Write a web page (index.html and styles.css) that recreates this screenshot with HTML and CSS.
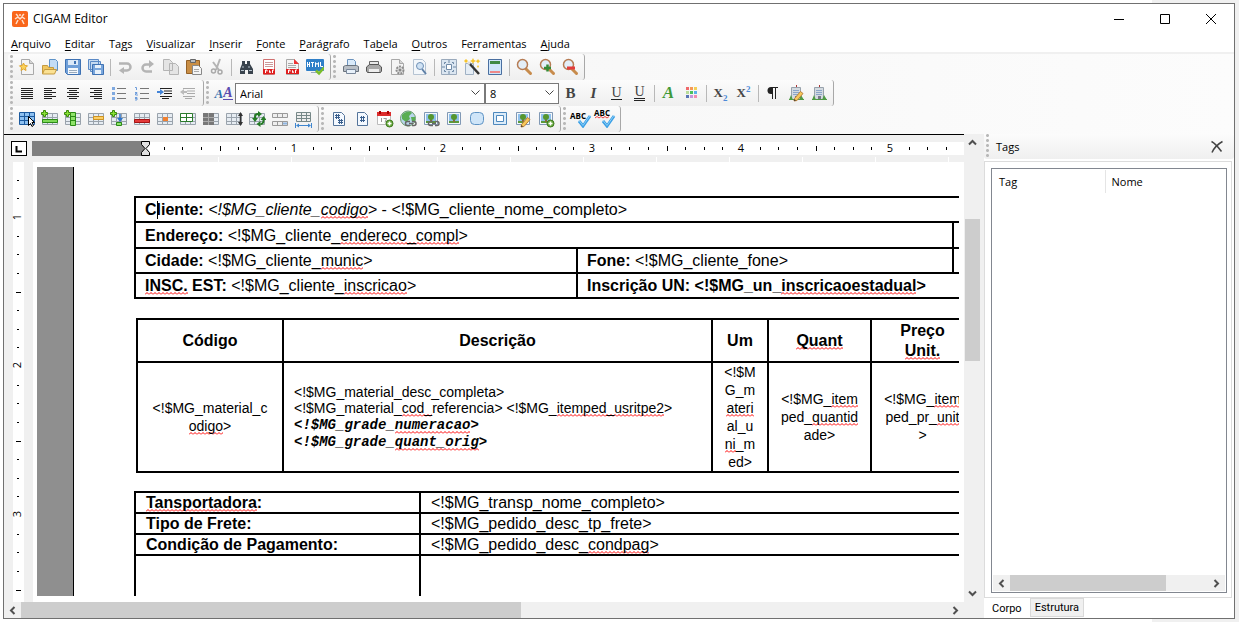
FILE: index.html
```html
<!DOCTYPE html>
<html lang="pt-BR">
<head>
    <meta charset="UTF-8">
    <meta name="viewport" content="width=device-width, initial-scale=1.0">
    <title>CIGAM Editor</title>
    <link rel="stylesheet" href="styles.css">
</head>
<body>

    <!-- shared icon parts -->
    <svg class="defs" width="0" height="0" aria-hidden="true">
        <defs>
            <pattern id="ticks-x" x="113" y="0" width="149" height="27" patternUnits="userSpaceOnUse">
                <path d="M19.5 12v3M37.5 12v3M56.5 12v3M75.5 11v5M93.5 12v3M112.5 12v3M130.5 12v3" stroke="#000"/>
            </pattern>
            <pattern id="ticks-y" x="0" y="55" width="11" height="149" patternUnits="userSpaceOnUse">
                <path d="M4 19.500h2M4 37.500h2M4 56.500h2M3 75.500h5M4 93.500h2M4 112.500h2M4 130.500h2" stroke="#000"/>
            </pattern>
            <pattern id="marks-x" x="186" y="0" width="73" height="27" patternUnits="userSpaceOnUse">
                <path d="M.5 22v5" stroke="#fff"/>
            </pattern>
            <symbol id="grid" viewBox="0 0 18 18">
                <path fill="#e6ecf2" d="M1 3h16v12H1z"/>
                <path fill="none" stroke="#9aa3ac" d="M1.500 3.500h15v11h-15zM1 7.500h16M1 11.500h16M6.500 3v12M11.500 3v12"/>
            </symbol>
            <symbol id="plus" viewBox="0 0 18 18">
                <path fill="#8ae234" stroke="#3a8a0c" d="M2.500 .5h2v2h2v2h-2v2h-2v-2h-2v-2h2z"/>
            </symbol>
            <symbol id="sheet" viewBox="0 0 18 18">
                <path fill="#f4f4f4" stroke="#a9a9a9" d="M3.500 1.500h8l4 4v11h-12z"/>
                <path fill="#d5d5d5" stroke="#a9a9a9" d="M11.500 1.500v4h4"/>
            </symbol>
            <symbol id="picture" viewBox="0 0 18 18">
                <path fill="#f3f8fc" stroke="#8199b5" d="M2.500 2.500h13v12h-13z"/>
                <path fill="#8fc0ec" d="M4 4h10v9H4z"/>
                <path fill="#5c9a3a" d="M4 11h10v2H4z"/>
                <path fill="#8a6a3c" d="M8 8h2v4H8z"/>
                <circle cx="9" cy="7" r="3" fill="#55962e"/>
            </symbol>
            <symbol id="chain" viewBox="0 0 18 18">
                <path fill="none" stroke="#666" stroke-width="1.500" d="M11 11.500H8.500a2 2 0 0 0 0 4H11M13 11.500h2a2 2 0 0 1 0 4h-2M10 13.500h4"/>
            </symbol>
            <symbol id="badge" viewBox="0 0 18 18">
                <circle cx="13.500" cy="13.500" r="3.500" fill="#66a83c" stroke="#3e7a1e"/>
                <path d="M13.500 11.500v4M11.500 13.500h4" stroke="#fff" stroke-width="1.500"/>
            </symbol>
            <symbol id="lens" viewBox="0 0 18 18">
                <path d="M11 11l4.500 4.500" stroke="#c78b4c" stroke-width="3" stroke-linecap="round"/>
                <circle cx="7.500" cy="6.500" r="5" fill="#e3eef8" stroke="#b67c54" stroke-width="1.500"/>
            </symbol>
            <symbol id="building" viewBox="0 0 18 18">
                <path fill="#d3dae0" stroke="#98a2ac" d="M4.500 3.500h9v12h-9z"/>
                <path d="M6 6.500h6M6 8.500h6M6 10.500h6" stroke="#8ba5c8"/>
                <path fill="#778" d="M8 12h3v4H8z"/>
                <path fill="#4f9a45" d="M2 16l2-5 2 5zM12 16l2-5 3 5zM2 15h15v1H2z"/>
                <path d="M9.500 1v2" stroke="#a33"/>
            </symbol>
            <symbol id="pencil" viewBox="0 0 18 18">
                <path fill="#f6c75a" stroke="#b9803a" d="M7.500 14.500l6-7 2.500 2-6 7-3 .5z"/>
                <path fill="#333" d="M7 17l.5-2 1.500 1.500z"/>
            </symbol>
            <symbol id="check" viewBox="0 0 22 18">
                <path fill="none" stroke="#3ba0e6" stroke-width="3" d="M9 11l4 5 7-10"/>
                <path fill="none" stroke="#8ccdf5" d="M9 10.500l4 5 7-10"/>
            </symbol>
        </defs>
    </svg>

    <div class="window">

        <header class="titlebar">
            <svg class="app-icon" width="16" height="16" viewBox="0 0 16 16">
                <rect width="16" height="16" rx="2" fill="#f9661b"/>
                <path fill="none" stroke="#ffe0cc" stroke-width="1.500" d="M4 3l2 2M12 3l-2 2M3 8l3-2 2 2 2-2 3 2M6 9l-2 4M10 9l2 4M8 3v2"/>
            </svg>
            <h1>CIGAM Editor</h1>
            <div class="window-controls">
                <button aria-label="Minimizar"><svg width="12" height="12"><path d="M1 6.500h10" stroke="#000"/></svg></button>
                <button aria-label="Maximizar"><svg width="12" height="12"><path d="M1.500 1.500h9v9h-9z" fill="none" stroke="#000"/></svg></button>
                <button aria-label="Fechar"><svg width="12" height="12"><path d="M1 1l10 10M11 1L1 11" stroke="#000"/></svg></button>
            </div>
        </header>

        <nav class="menubar">
            <button><u>A</u>rquivo</button>
            <button><u>E</u>ditar</button>
            <button>Ta<u>g</u>s</button>
            <button><u>V</u>isualizar</button>
            <button><u>I</u>nserir</button>
            <button><u>F</u>onte</button>
            <button><u>P</u>arágrafo</button>
            <button>Ta<u>b</u>ela</button>
            <button><u>O</u>utros</button>
            <button>Fe<u>r</u>ramentas</button>
            <button><u>A</u>juda</button>
        </nav>

        <div class="toolbars">
            <div class="toolbar-row">
                <div class="toolbar">
                    <button title="Novo"><svg viewBox="0 0 18 18"><use href="#sheet"/><path fill="#fbd25a" stroke="#e0a52e" d="M5.500 5l1.200 2.500 2.800.3-2 2 .5 2.700L5.500 11 3 12.500l.5-2.700-2-2 2.800-.3z"/></svg></button>
                    <button title="Abrir"><svg viewBox="0 0 18 18"><path fill="#c3dcf5" stroke="#5e93c8" d="M8.500 1.500h6l2 2v9h-8z"/><path fill="#f1c75f" stroke="#c49a40" d="M1.500 7.500h5l1 2h5v6h-11z"/><path fill="#fbe192" stroke="#c49a40" d="M3.500 11.500h12l-2 4.500h-12z"/></svg></button>
                    <button title="Salvar"><svg viewBox="0 0 18 18"><path fill="#6f9fd8" stroke="#3f72b3" d="M1.500 1.500h15v15h-13l-2-2z"/><path fill="#dbe9f8" d="M4 2h10v5H4z"/><path fill="#f4f8fc" d="M4 10h10v6H4z"/><path fill="#3f72b3" d="M10 3h2v3h-2z"/><path d="M5 12.500h8M5 14.500h8" stroke="#9ab"/></svg></button>
                    <button title="Salvar tudo"><svg viewBox="0 0 18 18"><path fill="#c6dbf1" stroke="#5b8ac6" d="M1.500 1.500h10v10h-10zM3.500 3.500h10v10h-10z"/><path fill="#79a6dc" stroke="#3f72b3" d="M5.500 6.500h11v10h-11z"/><path fill="#e8f1fa" d="M8 7h6v3H8zM8 12h6v4H8z"/></svg></button>
                    <span class="sep"></span>
                    <button title="Desfazer"><svg viewBox="0 0 18 18"><path fill="none" stroke="#b4b4b4" stroke-width="2.500" d="M3 5.500h8a3.500 3.500 0 0 1 0 7H6"/><path fill="#b4b4b4" d="M8 9v7l-5-3.500z"/></svg></button>
                    <button title="Refazer"><svg viewBox="0 0 18 18"><path fill="none" stroke="#b4b4b4" stroke-width="2.500" d="M12 6.500H7a3.500 3.500 0 0 0 0 7h6"/><path fill="#b4b4b4" d="M10 2v8l5-4z"/></svg></button>
                    <button title="Copiar"><svg viewBox="0 0 18 18"><path fill="#e4e4e4" stroke="#b4b4b4" d="M1.500 1.500h6l3 3v8h-9zM7.500 5.500h6l3 3v8h-9z"/></svg></button>
                    <button title="Colar"><svg viewBox="0 0 18 18"><path fill="#c98e45" stroke="#946127" d="M1.500 2.500h13v13h-13z"/><path fill="#b9bdc2" stroke="#666" d="M5.500 1.500h5v3h-5z"/><path fill="#f5f5f5" stroke="#888" d="M7.500 7.500h6l3 3v6h-9z"/><path d="M9 11.500h5M9 13.500h5" stroke="#aaa"/></svg></button>
                    <button title="Recortar"><svg viewBox="0 0 18 18"><path d="M12 1L8 12M5 4l6 8" stroke="#b4b4b4" stroke-width="2"/><circle cx="5.500" cy="13" r="2" fill="none" stroke="#a9a9a9" stroke-width="1.500"/><circle cx="12" cy="14" r="2" fill="none" stroke="#a9a9a9" stroke-width="1.500"/></svg></button>
                    <span class="sep"></span>
                    <button title="Localizar"><svg viewBox="0 0 18 18"><path fill="#39434d" d="M5 3h3v3h2V3h3v3l3 5v5h-5v-4H8v4H3v-5l2-5z"/><path stroke="#b8c4cf" d="M4 12.500h3M12 12.500h3M6 8v2M12 8v2"/></svg></button>
                    <button title="Exportar PDF"><svg viewBox="0 0 18 18"><path fill="#fff" stroke="#d07070" d="M3.500 1.500h11v15h-11z"/><path stroke="#c99" d="M5 4.500h8M5 6.500h8M5 8.500h8"/><path fill="#e01f1f" d="M3 11h12v5H3z"/><path fill="none" stroke="#fff" d="M5.500 15v-3h1.500v1.500M9.500 12.500v2h1zM12.500 15v-3H14"/></svg></button>
                    <button title="Gerar PDF"><svg viewBox="0 0 18 18"><use href="#sheet"/><path fill="#e33" d="M11 1l5 5h-5z"/><path stroke="#aaa" d="M5 5.500h5M5 7.500h8M5 9.500h8"/><path fill="#e01f1f" d="M3 11h13v5H3z"/><path fill="none" stroke="#fff" d="M5.500 15v-3h1.500v1.500M9.500 12.500v2h1zM12.500 15v-3H14"/></svg></button>
                    <button title="Exportar HTML"><svg viewBox="0 0 18 18"><rect y="1" width="18" height="12" rx="1" fill="#2f7fc8"/><path fill="none" stroke="#fff" d="M1.500 4v5M3.500 4v5M1.500 6.500h2M5 4.500h3M6.500 4v5M9.500 9V4.500l1.500 2 1.500-2V9M14.500 4v4.500H17"/><path d="M5 14.500h6" stroke="#9ab"/><path fill="none" stroke="#79bd2a" stroke-width="2.500" d="M10 12.500l3 3 5-6"/></svg></button>
                </div>
                <div class="toolbar">
                    <button title="Imprimir"><svg viewBox="0 0 18 18"><path fill="#d9eafa" stroke="#6c93bd" d="M5.500 1.500h6l2 2v5h-8z"/><path fill="#b9bfc6" stroke="#6a737d" d="M1.500 8.500l2-1h11l2 1v5h-15z"/><path fill="#e8f1fa" stroke="#7a889b" d="M4.500 11.500h9v4h-9z"/></svg></button>
                    <button title="Impressão rápida"><svg viewBox="0 0 18 18"><path fill="#e9e9e9" stroke="#666" d="M4.500 3.500h9v4h-9z"/><path fill="#a8a8a8" stroke="#555" d="M1.500 9l3-2.500h9l3 2.500v4l-1 1.500h-13l-1-1.500z"/><path fill="#eee" d="M4 11h10v3H4z"/></svg></button>
                    <button title="Configurar página"><svg viewBox="0 0 18 18"><use href="#sheet"/><circle cx="12" cy="12" r="3.500" fill="#ddd" stroke="#8c8c8c" stroke-width="2" stroke-dasharray="2 1"/><circle cx="12" cy="12" r="1.500" fill="#888"/></svg></button>
                    <button title="Visualizar impressão"><svg viewBox="0 0 18 18"><path fill="#f3f7fb" stroke="#b5c3d2" d="M2.500 1.500h9l3 3v12h-12z"/><path stroke="#5e7fa6" stroke-width="2" d="M11 11l4 5"/><circle cx="9" cy="8" r="3.500" fill="#cfe2f4" stroke="#6e8fb5"/></svg></button>
                    <span class="sep"></span>
                    <button title="Ajustar"><svg viewBox="0 0 18 18"><path fill="#dbe6f1" stroke="#9aaabc" d="M1.500 1.500h15v15h-15z"/><path fill="#fff" stroke="#708ba8" d="M6.500 6.500h5v5h-5z"/><path stroke="#6d88a5" d="M9 2v3M9 13v3M2 9h3M13 9h3M4.500 6V4.500H6M12 4.500h1.500V6M4.500 12v1.500H6M12 13.500h1.500V12" fill="none"/></svg></button>
                    <button title="Assistente"><svg viewBox="0 0 18 18"><path fill="#e5edf5" stroke="#9fb1c4" d="M2.500 5.500h8v11h-8z"/><path d="M6 5l10 11" stroke="#333" stroke-width="2.500"/><path d="M5 4l2 2" stroke="#ddd" stroke-width="2.500"/><path fill="#f7c52d" d="M10 0l1 2 2 1-2 1-1 2-1-2-2-1 2-1zM15 1l1 1.500L17.500 3l-1.500 1-1 1.500L14 4l-1.500-1L14 2.500zM3 1l1 1 1 1-1 1-1 1-1-1-1-1 1-1zM15 7l1 1.500-1 1.500-1-1.500z"/></svg></button>
                    <button title="Cabeçalho e rodapé"><svg viewBox="0 0 18 18"><path fill="#cfe6fb" stroke="#4a6fa0" d="M2.500 1.500h13v15h-13z"/><path fill="#3f8a45" d="M4 3h10v3H4z"/><path fill="#e88" d="M4 13h10v2H4z"/></svg></button>
                    <span class="sep"></span>
                    <button title="Zoom"><svg viewBox="0 0 18 18"><use href="#lens"/></svg></button>
                    <button title="Aumentar zoom"><svg viewBox="0 0 18 18"><use href="#lens"/><path d="M9.500 6.500v7M6 10h7" stroke="#358a35" stroke-width="2.500"/></svg></button>
                    <button title="Diminuir zoom"><svg viewBox="0 0 18 18"><use href="#lens"/><path d="M6 10h8" stroke="#e23b3b" stroke-width="3"/></svg></button>
                </div>
            </div>

            <div class="toolbar-row">
                <div class="toolbar">
                    <button title="Justificar"><svg viewBox="0 0 18 18"><path stroke="#222" d="M3 4.500h12M3 6.500h12M3 8.500h12M3 10.500h12M3 12.500h12M3 14.500h12"/></svg></button>
                    <button title="Alinhar à esquerda"><svg viewBox="0 0 18 18"><path stroke="#222" d="M3 4.500h12M3 6.500h8M3 8.500h12M3 10.500h8M3 12.500h12M3 14.500h8"/></svg></button>
                    <button title="Centralizar"><svg viewBox="0 0 18 18"><path stroke="#222" d="M3 4.500h12M5 6.500h8M3 8.500h12M5 10.500h8M3 12.500h12M5 14.500h8"/></svg></button>
                    <button title="Alinhar à direita"><svg viewBox="0 0 18 18"><path stroke="#222" d="M3 4.500h12M7 6.500h8M3 8.500h12M7 10.500h8M3 12.500h12M7 14.500h8"/></svg></button>
                    <button title="Marcadores"><svg viewBox="0 0 18 18"><path fill="#7fa9e0" d="M2 3h3v3H2zM2 8h3v3H2zM2 13h3v3H2z"/><path stroke="#777" d="M7 4.500h9M7 9.500h9M7 14.500h9"/></svg></button>
                    <button title="Numeração"><svg viewBox="0 0 18 18"><path fill="none" stroke="#6f9ddb" d="M2 3.500h1.500V6M2 8.500h2v1H2.500v1.500H5M2 13.500h2V16H2M2 14.500h2"/><path stroke="#777" d="M7 4.500h9M7 9.500h9M7 14.500h9"/></svg></button>
                    <button title="Aumentar recuo"><svg viewBox="0 0 18 18"><path stroke="#222" d="M4 4.500h12M8 7h8M8 9.500h8M4 12.500h12M6 14.500h7"/><path fill="#4384d8" d="M1 7h3V5l4 3-4 3V9H1z"/></svg></button>
                    <button title="Diminuir recuo"><svg viewBox="0 0 18 18"><path stroke="#aaa" d="M4 4.500h12M8 7h8M8 9.500h8M4 12.500h12M6 14.500h7"/><path fill="#bbb" d="M8 7H5V5L1 8l4 3V9h3z"/></svg></button>
                </div>
                <div class="toolbar">
                    <button title="Fonte" class="font-icon"><i>A</i><i>A</i></button>
                    <select class="font-name" aria-label="Nome da fonte"><option>Arial</option></select>
                    <select class="font-size" aria-label="Tamanho da fonte"><option>8</option></select>
                    <button title="Negrito" class="glyph"><b>B</b></button>
                    <button title="Itálico" class="glyph"><i>I</i></button>
                    <button title="Sublinhado" class="glyph"><span class="ul">U</span></button>
                    <button title="Sublinhado duplo" class="glyph"><span class="ul double">U</span></button>
                    <span class="sep"></span>
                    <button title="Cor da fonte" class="glyph green"><i>A</i></button>
                    <button title="Cores"><svg viewBox="0 0 18 18"><path fill="#f0696b" d="M3 3h3v3H3z"/><path fill="#f59a55" d="M7 3h3v3H7z"/><path fill="#f3cf58" d="M11 3h3v3h-3z"/><path fill="#b9dd9a" d="M3 7h3v3H3z"/><path fill="#4cc05c" d="M7 7h3v3H7z"/><path fill="#5db0ea" d="M11 7h3v3h-3z"/><path fill="#5a75b5" d="M3 11h3v3H3z"/><path fill="#c694dc" d="M7 11h3v3H7z"/><path fill="#f58bb0" d="M11 11h3v3h-3z"/></svg></button>
                    <span class="sep"></span>
                    <button title="Subscrito" class="glyph small"><b>X<sub>2</sub></b></button>
                    <button title="Sobrescrito" class="glyph small"><b>X<sup>2</sup></b></button>
                    <span class="sep"></span>
                    <button title="Marcas de parágrafo"><svg viewBox="0 0 18 18"><path fill="#222" d="M9 3v7H7a3.500 3.500 0 0 1 0-7z"/><path d="M8.500 3v12M11.500 3v12M7 3.500h7" stroke="#222"/></svg></button>
                    <button title="Editar empresa"><svg viewBox="0 0 18 18"><use href="#building"/><use href="#pencil"/></svg></button>
                    <button title="Empresa"><svg viewBox="0 0 18 18"><use href="#building"/></svg></button>
                </div>
            </div>

            <div class="toolbar-row">
                <div class="toolbar">
                    <button title="Selecionar tabela"><svg viewBox="0 0 18 18"><path fill="#8dc0f0" stroke="#1c5a9e" d="M1.500 2.500h15v12h-15zM1 6.500h16M1 10.500h16M6.500 2v13M11.500 2v13"/><path fill="#fff" stroke="#000" d="M10.500 6.500v9l2-2 1.500 3 1.500-1-1.500-3h2.500z"/></svg></button>
                    <button title="Inserir linha"><svg viewBox="0 0 18 18"><use href="#grid"/><path fill="#7ed957" stroke="#2b8a17" d="M1.500 9.500h15v3h-15z"/><use href="#plus"/></svg></button>
                    <button title="Inserir coluna"><svg viewBox="0 0 18 18"><use href="#grid"/><path fill="#8fe36a" stroke="#2b8a17" d="M6.500 2.500h5v13h-5zM7 6.500h4M7 10.500h4"/><use href="#plus"/></svg></button>
                    <button title="Selecionar linha"><svg viewBox="0 0 18 18"><use href="#grid"/><path fill="#fbcf67" stroke="#cf9320" d="M6.500 6.500h10v3h-10z"/></svg></button>
                    <button title="Inserir célula"><svg viewBox="0 0 18 18"><use href="#grid"/><path fill="#8fe36a" stroke="#2b8a17" d="M6.500 12.500h5v3h-5z"/><path d="M10 4v6" stroke="#2c73c9" stroke-width="1.500"/><path fill="#2c73c9" d="M7 8h6l-3 4z"/><use href="#plus"/></svg></button>
                    <button title="Excluir linha"><svg viewBox="0 0 18 18"><use href="#grid"/><path fill="#e33a3a" stroke="#a51313" d="M1.500 9.500h15v3h-15z"/></svg></button>
                    <button title="Excluir célula"><svg viewBox="0 0 18 18"><use href="#grid"/><path fill="#f08030" d="M7 7h5v4H7z"/></svg></button>
                    <button title="Bordas"><svg viewBox="0 0 18 18"><use href="#grid"/><path fill="#fff" stroke="#2b7a2b" d="M1.500 3.500h12v8h-12zM1 7.500h13M7.500 3v9"/></svg></button>
                    <button title="Sombreamento"><svg viewBox="0 0 18 18"><use href="#grid"/><path fill="#777" d="M1 3h11v12H1z"/><path d="M1 7.500h11M1 11.500h11M6.500 3v12" stroke="#aaa"/></svg></button>
                    <button title="Altura da linha"><svg viewBox="0 0 18 18"><use href="#grid"/><path stroke="#333" stroke-width="1.500" d="M15.500 4v10"/><path fill="#333" d="M13 6l2.500-4L18 6zM13 12l2.500 4 2.500-4z"/></svg></button>
                    <button title="Atualizar tabela"><svg viewBox="0 0 18 18"><use href="#grid"/><path fill="none" stroke="#247a24" stroke-width="2" d="M7 9V7a3 3 0 0 1 3-3M15.500 9v2a3 3 0 0 1-3 3"/><path fill="#247a24" d="M10 1l4 3-4 3zM12.500 11v6l-4-3zM4 8h6l-3 4zM12.500 10h6l-3-4z"/></svg></button>
                    <button title="Dividir tabela"><svg viewBox="0 0 18 18"><path fill="#eee" stroke="#999" d="M1.500 3.500h15v4h-15zM6.500 3v4M11.500 3v4M1.500 11.500h15v4h-15zM6.500 11v4M11.500 11v4"/><path d="M12 13.500h4" stroke="#8fb5e0" stroke-width="2"/></svg></button>
                    <button title="Largura automática"><svg viewBox="0 0 18 18"><path fill="#eee" stroke="#788" d="M2.500 2.500h14v9h-14zM2 5.500h15M2 8.500h15M7.500 2v10M12.500 2v10"/><path stroke="#3f86cf" d="M1.500 13v5M17.500 13v5M3 15.500h13"/><path fill="#3f86cf" d="M2 15.500l3-2v4zM17 15.500l-3-2v4z"/></svg></button>
                </div>
                <div class="toolbar">
                    <button title="Número de páginas"><svg viewBox="0 0 18 18"><path fill="#f4f9ff" stroke="#54749a" d="M3.500 2.500h8l3 3v10h-11z"/><path stroke="#3a5f8d" d="M6.500 4v5M8.500 4v5M5 5.500h5M5 7.500h5M9.500 9v5M11.500 9v5M8 10.500h5M8 12.500h5"/></svg></button>
                    <button title="Número da página"><svg viewBox="0 0 18 18"><path fill="#f4f9ff" stroke="#54749a" d="M4.500 2.500h7l3 3v10h-10z"/><path stroke="#3a5f8d" d="M8.500 6v6M10.500 6v6M7 7.500h5M7 10.500h5"/></svg></button>
                    <button title="Data"><svg viewBox="0 0 18 18"><path fill="#fff" stroke="#bbb" d="M1.500 2.500h13v12h-13z"/><path fill="#dc2c2c" d="M1 2h14v4H1z"/><path stroke="#a00" stroke-width="2" d="M4 1v3M12 1v3"/><path fill="none" stroke="#999" d="M5.500 8v4M7.500 8.500h3l-1.500 4"/><use href="#badge"/></svg></button>
                    <button title="Hiperlink"><svg viewBox="0 0 18 18"><circle cx="9" cy="8.500" r="7.500" fill="#b9d6ec" stroke="#6a9b6a"/><path fill="#5aae52" d="M3 5c3-4 8-4 10-2l-3 3 1 3-4 3-4-3zM12 7l4 0v4l-3 1z"/><use href="#chain"/></svg></button>
                    <button title="Imagem vinculada"><svg viewBox="0 0 18 18"><use href="#picture"/><use href="#chain"/></svg></button>
                    <button title="Imagem"><svg viewBox="0 0 18 18"><use href="#picture"/></svg></button>
                    <button title="Forma"><svg viewBox="0 0 18 18"><rect x="2.500" y="2.500" width="13" height="12" rx="4" fill="#cfe5f8" stroke="#5e93c4"/></svg></button>
                    <button title="Quadro de texto"><svg viewBox="0 0 18 18"><path fill="#dcecf9" stroke="#4d88bd" d="M2.500 2.500h13v12h-13z"/><path fill="#fff" stroke="#4d88bd" d="M5.500 5.500h7v6h-7z"/></svg></button>
                    <button title="Editar imagem"><svg viewBox="0 0 18 18"><use href="#picture"/><use href="#pencil"/></svg></button>
                    <button title="Adicionar imagem"><svg viewBox="0 0 18 18"><use href="#picture"/><use href="#badge"/></svg></button>
                </div>
                <div class="toolbar spelling">
                    <button title="Verificar ortografia" class="check-now"><span>ABC</span><svg viewBox="0 0 22 18"><use href="#check"/></svg></button>
                    <button title="Ortografia automática"><span>ABC</span><svg viewBox="0 0 22 18"><path fill="none" stroke="#e44" d="M1 8l2-1.500L5 8l2-1.500L9 8l2-1.500L13 8l2-1.500"/><use href="#check"/></svg></button>
                </div>
            </div>
        </div>

        <div class="workspace">
            <main class="editor">
                <div class="ruler-row">
                    <button class="tab-stop" aria-label="Tabulação"><svg width="14" height="13"><path d="M4.500 4v5.500H10" fill="none" stroke="#000" stroke-width="2"/></svg></button>
                    <svg class="ruler-x" height="27">
                        <rect y="7" width="100%" height="13" fill="#fff"/>
                        <rect width="100%" height="27" fill="url(#ticks-x)"/>
                        <rect x="186" width="100%" height="27" fill="url(#marks-x)"/>
                        <rect y="6" width="113" height="15" fill="#808080"/>
                        <path fill="#e0e0e0" stroke="#000" d="M109.500 6.500h8v3l-3.500 4 3.500 4v3h-8v-3l3.500-4-3.500-4z"/>
                        <g class="ruler-text">
                            <text x="262" y="17">1</text>
                            <text x="411" y="17">2</text>
                            <text x="560" y="17">3</text>
                            <text x="709" y="17">4</text>
                            <text x="858" y="17">5</text>
                        </g>
                    </svg>
                </div>
                <div class="page-area">
                    <svg class="ruler-y" width="11">
                        <rect width="11" height="100%" fill="#fff"/>
                        <rect width="11" height="100%" fill="url(#ticks-y)"/>
                        <g class="ruler-text">
                            <text transform="translate(8 55) rotate(-90)">1</text>
                            <text transform="translate(8 203) rotate(-90)">2</text>
                            <text transform="translate(8 352) rotate(-90)">3</text>
                        </g>
                    </svg>
                    <div class="canvas">
                        <div class="page">
                            <table class="client">
                                <colgroup><col class="c-city"><col class="c-phone"><col class="c-rest"></colgroup>
                                <tr><td colspan="3"><b>C<span class="caret"></span>liente:</b> <i>&lt;!$MG_cliente_<span class="typo">codigo</span>&gt;</i> - &lt;!$MG_cliente_nome_completo&gt;</td></tr>
                                <tr class="address"><td colspan="2"><b>Endereço:</b> &lt;!$MG_cliente_<span class="typo">endereco_compl</span>&gt;</td><td></td></tr>
                                <tr><td><b>Cidade:</b> &lt;!$MG_cliente_<span class="typo">munic</span>&gt;</td><td><b>Fone:</b> &lt;!$MG_cliente_fone&gt;</td><td></td></tr>
                                <tr><td><b><span class="typo">INSC.</span> EST:</b> &lt;!$MG_cliente_<span class="typo">inscricao</span>&gt;</td><td colspan="2"><b>Inscrição UN: &lt;!$MG_un_<span class="typo">inscricaoestadual</span>&gt;</b></td></tr>
                            </table>

                            <table class="items">
                                <colgroup><col class="c-code"><col class="c-desc"><col class="c-unit"><col class="c-price"><col class="c-price"><col></colgroup>
                                <tr>
                                    <th>Código</th>
                                    <th>Descrição</th>
                                    <th>Um</th>
                                    <th><span class="typo">Quant</span></th>
                                    <th>Preço<br><span class="typo">Unit.</span></th>
                                    <th></th>
                                </tr>
                                <tr>
                                    <td>&lt;!$MG_material_c<br><span class="typo">odigo</span>&gt;</td>
                                    <td class="desc">&lt;!$MG_material_desc_completa&gt;<br>&lt;!$MG_material_<span class="typo">cod_</span>referencia&gt; &lt;!$MG_<span class="typo">itemped_usritpe2</span>&gt;<br><code>&lt;!$MG_grade_<span class="typo">numeracao</span>&gt;</code><br><code>&lt;!$MG_grade_<span class="typo">quant_orig</span>&gt;</code></td>
                                    <td>&lt;!$M<br>G_m<br><span class="typo">ateri</span><br>al_u<br><span class="typo">ni</span>_m<br>ed&gt;</td>
                                    <td>&lt;!$MG_<span class="typo">item</span><br>ped_<span class="typo">quantid</span><br>ade&gt;</td>
                                    <td>&lt;!$MG_<span class="typo">item</span><br>ped_pr_<span class="typo">unit</span><br>&gt;</td>
                                    <td></td>
                                </tr>
                            </table>

                            <table class="shipping">
                                <colgroup><col class="c-label"><col></colgroup>
                                <tr><th><span class="typo">Tansportadora</span>:</th><td>&lt;!$MG_transp_nome_completo&gt;</td></tr>
                                <tr><th>Tipo de Frete:</th><td>&lt;!$MG_pedido_desc_tp_frete&gt;</td></tr>
                                <tr><th>Condição de Pagamento:</th><td>&lt;!$MG_pedido_desc_<span class="typo">condpag</span>&gt;</td></tr>
                                <tr class="blank"><th></th><td></td></tr>
                            </table>
                        </div>
                    </div>
                </div>
                <div class="scroll-x">
                    <button aria-label="Rolar para a esquerda"><svg width="9" height="9"><path d="M6.500 1L3 4.500 6.500 8" fill="none" stroke="#505050" stroke-width="2"/></svg></button>
                    <div class="track"><div class="thumb doc-thumb"></div></div>
                    <button aria-label="Rolar para a direita"><svg width="9" height="9"><path d="M2.500 1L6 4.500 2.500 8" fill="none" stroke="#505050" stroke-width="2"/></svg></button>
                </div>
            </main>

            <div class="scroll-y">
                <button aria-label="Rolar para cima"><svg width="9" height="9"><path d="M1 6.500L4.500 3 8 6.500" fill="none" stroke="#505050" stroke-width="2"/></svg></button>
                <div class="track"><div class="thumb"></div></div>
                <button aria-label="Rolar para baixo"><svg width="9" height="9"><path d="M1 2.500L4.500 6 8 2.500" fill="none" stroke="#505050" stroke-width="2"/></svg></button>
            </div>

            <aside class="tags-panel">
                <div class="panel-header">
                    <h2>Tags</h2>
                    <button aria-label="Fechar painel"><svg width="14" height="14"><path d="M1.500 1.500c4 2 7 6 10 10M12.500 1.500C8 4 4 8 2 12.500" fill="none" stroke="#444" stroke-width="1.500"/></svg></button>
                </div>
                <div class="panel-body">
                    <div class="list">
                        <table>
                            <thead><tr><th>Tag</th><th>Nome</th></tr></thead>
                        </table>
                        <div class="scroll-x">
                            <button aria-label="Rolar lista para a esquerda"><svg width="9" height="9"><path d="M6.500 1L3 4.500 6.500 8" fill="none" stroke="#505050" stroke-width="2"/></svg></button>
                            <div class="track"><div class="thumb list-thumb"></div></div>
                            <button aria-label="Rolar lista para a direita"><svg width="9" height="9"><path d="M2.500 1L6 4.500 2.500 8" fill="none" stroke="#505050" stroke-width="2"/></svg></button>
                        </div>
                    </div>
                </div>
                <div class="tabs" role="tablist">
                    <button role="tab" class="active" aria-selected="true">Corpo</button>
                    <button role="tab" aria-selected="false">Estrutura</button>
                </div>
            </aside>
        </div>
    </div>

</body>
</html>
```

FILE: styles.css
```css
* { box-sizing: border-box; margin: 0; padding: 0; }
body {
    height: 100vh;
    padding: 3px 4px 3px 3px;
    background: linear-gradient(to right, #fff 93%, #f0f0f0 93%);
    font-family: "Open Sans", "Noto Sans", sans-serif;
    font-size: 12px;
    color: #000;
    overflow: hidden;
}
button {
    background: none;
    border: none;
    font: inherit;
    color: inherit;
    display: flex;
    align-items: center;
    justify-content: center;
}
svg { display: block; flex: none; }
.defs { position: absolute; }
.window {
    height: 100%;
    display: flex;
    flex-direction: column;
    border: 1px solid #707070;
    background: #fff;
}

/* title and menu */
.titlebar {
    display: flex;
    align-items: center;
    height: 29px;
    padding-left: 8px;
    flex: none;
}
.titlebar h1 {
    font-size: 12px;
    font-weight: normal;
    margin-left: 5px;
}
.window-controls { display: flex; margin-left: auto; }
.window-controls button { width: 46px; height: 29px; }
.menubar {
    display: flex;
    gap: 14px;
    height: 19px;
    padding: 2px 0 0 7px;
    flex: none;
}
.menubar button { font-size: 11px; }
.menubar u { text-underline-offset: 2px; }

/* toolbars */
.toolbars {
    flex: none;
    padding: 0 0 2px 4px;
    border-top: 2px solid #f0f0f0;
    background: linear-gradient(to right, #f4f4f4, #fcfcfc);
}
.toolbar-row { display: flex; height: 26px; }
.toolbar {
    display: flex;
    align-items: center;
    padding: 0 3px 0 8px;
    border-right: 1px solid #a8a8a8;
    border-radius: 3px;
    background:
        radial-gradient(circle, #b8b8b8 1px, transparent 2px) 2px 5px / 3px 5px repeat-y,
        linear-gradient(#fcfcfc, #efefef);
}
.toolbar:first-child { padding: 0 4px 0 7px; }
.toolbar button { width: 23px; height: 22px; }
.toolbar svg { width: 18px; height: 18px; }
.sep {
    width: 1px;
    height: 17px;
    margin: 0 2px 0 3px;
    background: #b8b8b8;
}
.toolbar select {
    appearance: none;
    height: 21px;
    padding-left: 4px;
    border: 1px solid #7a7a7a;
    border-radius: 0;
    font-family: inherit;
    font-size: 11px;
    color: #000;
    background: #fff url("data:image/svg+xml,%3Csvg xmlns='http://www.w3.org/2000/svg' width='9' height='6'%3E%3Cpath d='M.5 .5l4 4 4-4' fill='none' stroke='%23444'/%3E%3C/svg%3E") no-repeat right 4px center;
}
.font-name { width: 250px; }
.font-size { width: 74px; }
.glyph {
    font-family: "Liberation Serif", serif;
    font-size: 15px;
    color: #444;
}
.glyph i { font-weight: bold; }
.ul { line-height: 12px; font-size: 14px; border-bottom: 1px solid #222; }
.ul.double { border-bottom: 3px double #222; }
.glyph.green { color: #3f9a3a; font-size: 17px; }
.glyph.small { font-size: 13px; }
.glyph sub, .glyph sup { font-size: 9px; line-height: 0; color: #4c8ad8; }
.font-icon {
    font-family: "Liberation Serif", serif;
    font-weight: bold;
    font-size: 14px;
    color: #5b4bb0;
}
.font-icon i { border-bottom: 1px solid #5b4bb0; line-height: 13px; }
.font-icon i:first-child { color: #2f6cab; border: none; font-size: 13px; }
.spelling button { width: 24px; position: relative; }
.toolbar.spelling svg { width: 22px; }
.spelling span {
    position: absolute;
    top: 1px;
    left: 1px;
    font-size: 8px;
    line-height: 8px;
    font-weight: bold;
}
.spelling .check-now span { top: 4px; }

/* workspace */
.workspace {
    display: flex;
    flex: 1;
    min-height: 0;
    background: #f0f0f0;
}
.editor {
    flex: 1;
    min-width: 0;
    display: flex;
    flex-direction: column;
    border-top: 1px solid #000;
}
.ruler-row { display: flex; height: 27px; flex: none; padding-left: 7px; }
.tab-stop {
    width: 16px;
    height: 15px;
    margin: 6px 5px 0 0;
    border: 1px solid #000;
    background: #fff;
}
.ruler-x { flex: 1; min-width: 0; }
.ruler-text {
    font-size: 11px;
    text-anchor: middle;
}
.page-area {
    flex: 1;
    min-height: 0;
    display: flex;
    padding-left: 9px;
}
.ruler-y { height: 100%; overflow: visible; }
.canvas {
    flex: 1;
    min-width: 0;
    margin-left: 9px;
    padding: 5px 5px 6px 4px;
    background: #fff;
}
.page {
    height: 100%;
    overflow: hidden;
    padding: 29px 0 0 61px;
    border-left: 36px solid #8f8f8f;
    box-shadow: inset 1px 0 #000;
    font-family: "Liberation Sans", Arial, sans-serif;
    font-size: 16px;
    white-space: nowrap;
}
.page table {
    table-layout: fixed;
    border-collapse: collapse;
    width: 1000px;
}
.page td, .page th { border: 2px solid #000; }
.client td { height: 25px; padding: 0 9px; line-height: 23px; }
.client .address td { height: 26px; }
.c-city { width: 442px; }
.c-phone { width: 376px; }
.page .items { margin: 19px 0 18px 2px; }
.items th { height: 43px; line-height: 20px; }
.items td {
    height: 110px;
    font-size: 14px;
    line-height: 18px;
    text-align: center;
}
.items .desc {
    padding-left: 10px;
    line-height: 16px;
    text-align: left;
}
.desc code {
    font-family: "Liberation Mono", "Courier New", monospace;
    font-size: 14px;
    font-weight: bold;
    font-style: italic;
}
.c-code { width: 146px; }
.c-desc { width: 429px; }
.c-unit { width: 56px; }
.c-price { width: 103px; }
.c-label { width: 285px; }
.shipping th, .shipping td {
    height: 21px;
    padding: 0 10px;
    line-height: 19px;
    text-align: left;
}
.shipping .blank td { height: 80px; }
.typo {
    padding-bottom: 1px;
    background: url("data:image/svg+xml,%3Csvg xmlns='http://www.w3.org/2000/svg' width='4' height='3'%3E%3Cpath d='M0 2.500l2-2 2 2' fill='none' stroke='%23f00'/%3E%3C/svg%3E") repeat-x left bottom;
}
.caret {
    position: relative;
}
.caret::after {
    content: "";
    position: absolute;
    top: 0;
    left: 0;
    width: 1px;
    height: 18px;
    background: #000;
}

/* scrollbars */
.scroll-x { display: flex; height: 16px; flex: none; background: #f0f0f0; }
.scroll-x button { width: 17px; }
.scroll-y {
    display: flex;
    flex-direction: column;
    width: 15px;
    margin: 0 4px 16px 1px;
}
.scroll-y button { height: 17px; }
.track { flex: 1; }
.thumb { background: #cdcdcd; }
.doc-thumb { width: 54%; height: 100%; }
.list-thumb { width: 79%; height: 100%; }
.scroll-y .track { padding-top: 68px; }
.scroll-y .thumb { height: 142px; }

/* tags panel */
.tags-panel {
    width: 250px;
    flex: none;
    display: flex;
    flex-direction: column;
    background: #fff;
}
.panel-header {
    display: flex;
    align-items: center;
    justify-content: space-between;
    height: 25px;
    padding: 0 10px 0 12px;
    margin-bottom: 2px;
    border-radius: 3px;
    background:
        radial-gradient(circle, #b8b8b8 1px, transparent 2px) 2px 4px / 3px 5px repeat-y,
        linear-gradient(#fcfcfc, #efefef);
}
.panel-header h2 { font-size: 11px; font-weight: normal; }
.panel-body {
    flex: 1;
    min-height: 0;
    margin-right: 2px;
    padding: 6px 4px 4px 6px;
    border: 1px solid #dcdcdc;
}
.list {
    height: 100%;
    display: flex;
    flex-direction: column;
    justify-content: space-between;
    padding: 1px;
    border: 1px solid #828790;
}
.list table { width: 100%; table-layout: fixed; border-collapse: collapse; }
.list th {
    height: 23px;
    padding-left: 6px;
    font-size: 11px;
    font-weight: normal;
    text-align: left;
}
.list th:first-child { width: 112px; border-right: 1px solid #e5e5e5; }
.tabs { display: flex; align-items: flex-start; height: 20px; }
.tabs button {
    height: 20px;
    padding: 0 8px;
    font-family: Roboto, sans-serif;
    font-size: 11px;
}
.tabs button:not(.active) {
    height: 19px;
    padding: 0 4px;
    border: 1px solid #d9d9d9;
    background: #f0f0f0;
}
```
